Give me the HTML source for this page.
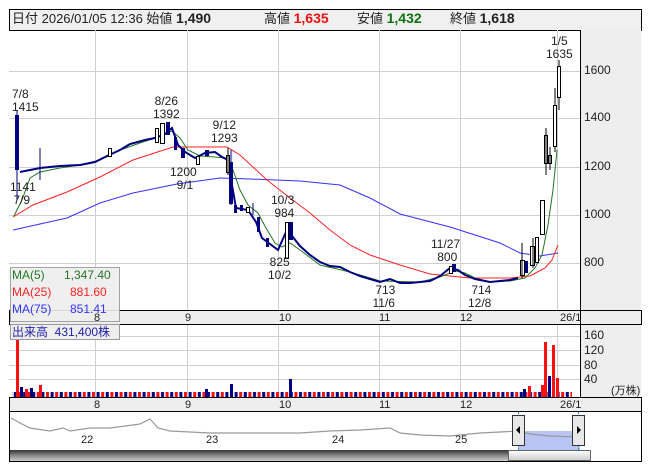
<!DOCTYPE html>
<html><head><meta charset="utf-8"><style>
*{margin:0;padding:0}
body{width:653px;height:470px;background:#fff;font-family:"Liberation Sans","Noto Sans CJK JP",sans-serif;position:relative;overflow:hidden}
.t{position:absolute;font-size:12px;color:#222;white-space:nowrap;line-height:13px}
</style></head><body>
<svg width="653" height="470" style="position:absolute;left:0;top:0" font-family="Liberation Sans, Noto Sans CJK JP, sans-serif">
<rect x="9.5" y="9.5" width="632" height="21" fill="#f0f0f0" stroke="#000"/>
<rect x="580" y="30" width="61" height="280" fill="#eeeeee"/>
<rect x="580" y="324" width="61" height="73" fill="#eeeeee"/>
<g stroke="#cfcfcf" stroke-width="1">
<path d="M95.5 30V310M187.5 30V310M278.5 30V310M379.5 30V310M460.5 30V310M557.5 30V310"/>
<path d="M9 71.5H580M9 118.5H580M9 167.5H580M9 215.5H580M9 263.5H580"/>
<path d="M95.5 324V397M187.5 324V397M278.5 324V397M379.5 324V397M460.5 324V397M557.5 324V397"/>
<path d="M9 336.5H580M9 350.5H580M9 365.5H580M9 379.5H580"/>
</g>
<rect x="9.5" y="310.5" width="632" height="14" fill="#eeeeee" stroke="#000"/>
<rect x="9.5" y="397.5" width="632" height="14" fill="#eeeeee" stroke="#000"/>
<line x1="580.5" y1="30" x2="580.5" y2="397" stroke="#000"/>
<!-- MAs -->
<polyline fill="none" stroke="#3333ff" stroke-width="1" points="13,230 40,224 67,218 100,203 133,193 177,184 220,178 250,179 300,181 340,185 370,198 400,214 450,227 500,243 520,253 540,256 558,253"/>
<polyline fill="none" stroke="#ff2222" stroke-width="1" points="13,217 33,205 67,192 100,177 133,160 173,147 227,147 240,155 267,180 290,198 310,213 330,230 350,245 370,255 400,265 430,274 470,278 510,278 530,276 545,268 552,260 558,245"/>
<polyline fill="none" stroke="#227722" stroke-width="1" points="14,216 22,200 30,178 40,172 60,168 80,165 100,160 120,150 140,143 155,138 163,135 172,131 180,138 188,150 200,156 215,157 225,158 233,170 240,190 248,205 258,213 266,228 275,243 282,247 290,243 300,250 320,265 350,272 380,281 420,282 440,277 455,271 465,273 475,278 490,282 510,281 525,278 535,268 542,255 548,225 553,190 557,150"/>
<!-- price path -->
<polyline fill="none" stroke="#000080" stroke-width="2" points="20,172 30,170 40,168 60,166 80,165 95,162 105,157 120,150 130,144 145,140 155,138 165,134 172,128 178,145 185,152 195,158 205,153 215,152 222,157 228,160 232,185 236,208 248,210 256,222 262,238 270,244 278,250 286,232 292,236 300,246 310,255 320,262 330,266 340,267 350,272 360,276 370,279 380,282 390,279 400,283 410,283 420,282 430,281 440,276 450,268 458,270 465,275 475,279 490,282 500,281 510,280 518,278"/>
<g fill="#000080">
<rect x="15" y="115" width="4" height="55"/>
<rect x="166" y="122" width="4" height="13"/><rect x="174" y="137" width="3" height="13"/>
<rect x="181" y="148" width="4" height="10"/><rect x="205" y="150" width="4" height="6"/>
<rect x="229" y="162" width="4" height="42"/><rect x="234" y="205" width="3" height="8"/><rect x="240" y="205" width="3" height="6"/>
<rect x="257" y="217" width="3" height="15"/><rect x="266" y="238" width="3" height="9"/>
<rect x="289" y="222" width="4" height="18"/><rect x="452" y="264" width="4" height="8"/>
<rect x="524" y="261" width="4" height="12"/>
</g>
<g fill="none" stroke="#000080"><path d="M17 110V200M40 148V180M231 150V205M253 203V215"/></g>
<g fill="#fff" stroke="#000" stroke-width="1">
<rect x="108.5" y="148.5" width="3" height="8"/><rect x="155.5" y="128.5" width="3" height="14"/>
<rect x="160.5" y="123.5" width="4" height="20"/><rect x="196.5" y="156.5" width="3" height="8"/>
<rect x="226.5" y="155.5" width="3" height="17"/><rect x="246.5" y="207.5" width="3" height="5"/>
<rect x="285.5" y="222.5" width="3" height="36"/><rect x="449.5" y="266.5" width="3" height="7"/>
<rect x="520.5" y="260.5" width="4" height="15"/><rect x="530.5" y="246.5" width="4" height="19"/>
<rect x="535.5" y="237.5" width="3" height="25"/><rect x="540.5" y="200.5" width="4" height="34"/>
<rect x="544.5" y="135.5" width="3" height="28"/><rect x="548.5" y="155.5" width="3" height="8"/>
<rect x="553.5" y="105.5" width="3" height="41"/><rect x="557.5" y="66.5" width="3" height="31"/>
<path d="M559 60V66M559 97V110M555 88V105M555 146V152M546 128V175M550 147V170M533 238V268M522 243V278M228 148V175"/>
</g>
<!-- volume bars -->
<defs><pattern id="vp" width="9.2" height="10" patternUnits="userSpaceOnUse"><rect x="0" width="3" height="10" fill="#ff1010"/><rect x="4.6" width="3" height="10" fill="#000080"/></pattern></defs>
<rect x="12" y="392" width="560" height="5" fill="url(#vp)"/>
<g fill="#ff1010">
<rect x="16" y="340" width="3" height="57"/><rect x="39" y="385" width="3" height="12"/><rect x="544" y="342" width="3" height="55"/><rect x="552" y="345" width="3" height="52"/><rect x="556" y="378" width="3" height="19"/>
<rect x="25" y="389" width="3" height="8"/><rect x="528" y="386" width="3" height="11"/><rect x="541" y="385" width="3" height="12"/>
</g>
<g fill="#000080">
<rect x="20" y="387" width="3" height="10"/><rect x="30" y="388" width="3" height="9"/><rect x="548" y="376" width="3" height="21"/><rect x="523" y="389" width="3" height="8"/>
<rect x="230" y="384" width="3" height="13"/><rect x="289" y="379" width="3" height="18"/><rect x="205" y="389" width="3" height="8"/>
</g>
<!-- navigator -->
<rect x="9.5" y="411.5" width="632" height="50" fill="#fff" stroke="#000"/>
<rect x="518" y="431" width="62" height="19" fill="#b8c4f4"/>
<polyline fill="none" stroke="#999" stroke-width="1.2" points="11,418 20,423 30,428 50,431 63,428 70,431 90,428 110,428 125,426 140,424 150,419 158,428 170,431 190,432 210,433 250,433 300,433 330,431 360,430 390,428 400,433 420,435 450,436 480,433 500,432 518,431 530,434 550,436 578,437"/>
<path d="M518.5 412V450M578.5 412V450" stroke="#1a9ad6" stroke-dasharray="2,1"/>
<rect x="512.5" y="415.5" width="12" height="30" fill="#e8e8e8" stroke="#333"/>
<rect x="572.5" y="415.5" width="12" height="30" fill="#e8e8e8" stroke="#333"/>
<path d="M516 430l4-4v8z" fill="#000"/><path d="M581 430l-4-4v8z" fill="#000"/>
<defs><linearGradient id="sg" x1="0" y1="0" x2="0" y2="1"><stop offset="0" stop-color="#333"/><stop offset="0.5" stop-color="#888"/><stop offset="1" stop-color="#ccc"/></linearGradient>
<linearGradient id="tg" x1="0" y1="0" x2="0" y2="1"><stop offset="0" stop-color="#fff"/><stop offset="1" stop-color="#ccc"/></linearGradient></defs>
<rect x="10" y="450" width="499" height="11" fill="url(#sg)"/>
<rect x="508.5" y="450.5" width="82" height="10" fill="url(#tg)" stroke="#666"/>
<rect x="10.5" y="267.5" width="109" height="54" fill="#eeeeee" stroke="#999" opacity="0.9"/>
<rect x="10.5" y="324.5" width="109" height="15" fill="#eeeeee" stroke="#999"/>
</svg>
<div class="t" style="left:12px;top:12px;font-size:13px">日付 2026/01/05 12:36 始値 <b style="font-size:14px">1,490</b></div>
<div class="t" style="left:264px;top:12px;font-size:13px">高値 <b style="font-size:14px;color:#f01010">1,635</b></div>
<div class="t" style="left:357px;top:12px;font-size:13px">安値 <b style="font-size:14px;color:#107010">1,432</b></div>
<div class="t" style="left:450px;top:12px;font-size:13px">終値 <b style="font-size:14px">1,618</b></div>
<div class="t" style="left:546px;top:35px;text-align:center">1/5<br>1635</div>
<div class="t" style="left:12px;top:88px">7/8<br>1415</div>
<div class="t" style="left:153px;top:95px;text-align:center">8/26<br>1392</div>
<div class="t" style="left:211px;top:119px;text-align:center">9/12<br>1293</div>
<div class="t" style="left:170px;top:166px;text-align:center">1200<br>&nbsp;9/1</div>
<div class="t" style="left:10px;top:181px">1141<br>&nbsp;7/9</div>
<div class="t" style="left:271px;top:194px;text-align:center">10/3<br>&nbsp;984</div>
<div class="t" style="left:268px;top:256px;text-align:center">825<br>10/2</div>
<div class="t" style="left:431px;top:238px;text-align:center">11/27<br>&nbsp;800</div>
<div class="t" style="left:372px;top:284px;text-align:center">&nbsp;713<br>11/6</div>
<div class="t" style="left:468px;top:284px;text-align:center">&nbsp;714<br>12/8</div>
<div class="t" style="left:584px;top:64px">1600</div>
<div class="t" style="left:584px;top:111px">1400</div>
<div class="t" style="left:584px;top:160px">1200</div>
<div class="t" style="left:584px;top:208px">1000</div>
<div class="t" style="left:584px;top:256px">800</div>
<div class="t" style="left:12px;top:269px;color:#227722">MA(5)</div><div class="t" style="left:64px;top:269px;color:#227722">1,347.40</div>
<div class="t" style="left:12px;top:286px;color:#ff2222">MA(25)</div><div class="t" style="left:70px;top:286px;color:#ff2222">881.60</div>
<div class="t" style="left:12px;top:303px;color:#3333ff">MA(75)</div><div class="t" style="left:70px;top:303px;color:#3333ff">851.41</div>
<div class="t" style="left:12px;top:326px;color:#2222aa">出来高 &nbsp;431,400株</div>
<div class="t" style="left:94px;top:312px;font-size:11px">8</div><div class="t" style="left:185px;top:312px;font-size:11px">9</div><div class="t" style="left:279px;top:312px;font-size:11px">10</div><div class="t" style="left:379px;top:312px;font-size:11px">11</div><div class="t" style="left:460px;top:312px;font-size:11px">12</div><div class="t" style="left:560px;top:312px;font-size:11px">26/1</div>
<div class="t" style="left:94px;top:399px;font-size:11px">8</div><div class="t" style="left:185px;top:399px;font-size:11px">9</div><div class="t" style="left:279px;top:399px;font-size:11px">10</div><div class="t" style="left:379px;top:399px;font-size:11px">11</div><div class="t" style="left:460px;top:399px;font-size:11px">12</div><div class="t" style="left:560px;top:399px;font-size:11px">26/1</div>
<div class="t" style="left:584px;top:329px">160</div><div class="t" style="left:584px;top:344px">120</div><div class="t" style="left:584px;top:359px">80</div><div class="t" style="left:584px;top:373px">40</div>
<div class="t" style="left:611px;top:385px;font-size:11px">(万株)</div>
<div class="t" style="left:81px;top:434px;font-size:11px">22</div><div class="t" style="left:206px;top:434px;font-size:11px">23</div><div class="t" style="left:332px;top:434px;font-size:11px">24</div><div class="t" style="left:455px;top:434px;font-size:11px">25</div>
</body></html>
